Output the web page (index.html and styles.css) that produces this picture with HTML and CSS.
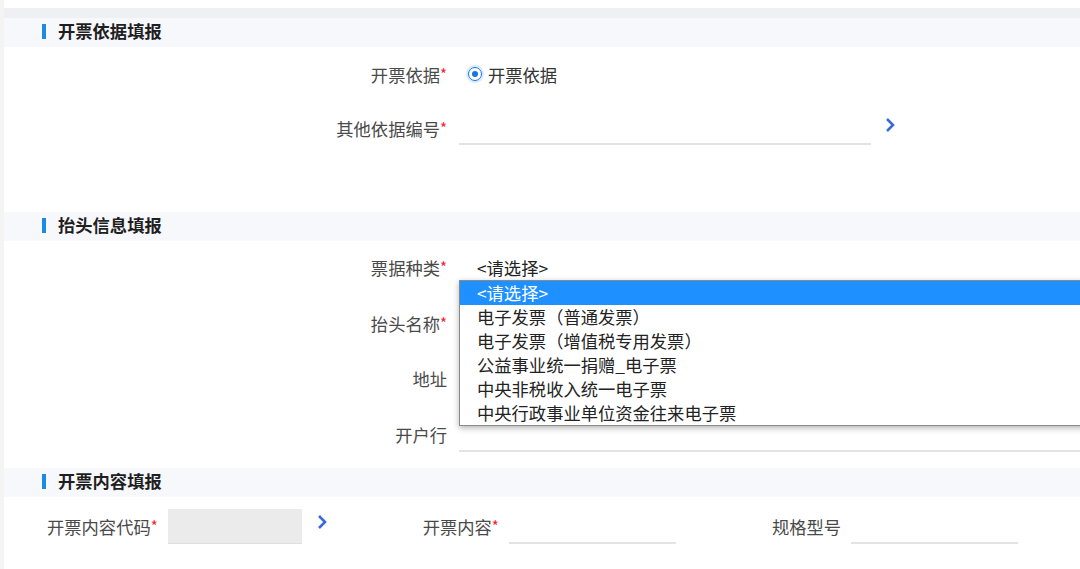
FILE: index.html
```html
<!DOCTYPE html>
<html lang="zh-CN">
<head>
    <meta charset="UTF-8">
    <meta name="viewport" content="width=device-width, initial-scale=1.0">
    <title>开票信息填报</title>
    <link rel="stylesheet" href="styles.css">
</head>
<body>
    <div class="page">
        <div class="top-card"></div>
        <div class="band"></div>

        <div class="card">
            <!-- 开票依据 -->
            <div class="section-title"><span class="bar"></span>开票依据填报</div>
            <div class="section-body first">
                <div class="form-row">
                    <label class="label">开票依据<i>*</i></label>
                    <div class="field">
                        <span class="radio"><span class="dot"></span></span>
                        <span class="radio-text">开票依据</span>
                    </div>
                </div>
                <div class="form-row">
                    <label class="label">其他依据编号<i>*</i></label>
                    <div class="field">
                        <input class="line-input short" type="text">
                        <svg class="chevron" width="10" height="16" viewBox="0 0 10 16"><path d="M2 2 L8 8 L2 14" fill="none" stroke="#3a6bd6" stroke-width="2.6"/></svg>
                    </div>
                </div>
            </div>

            <!-- 抬头信息 -->
            <div class="section-title"><span class="bar"></span>抬头信息填报</div>
            <div class="section-body second">
                <div class="form-row">
                    <label class="label">票据种类<i>*</i></label>
                    <div class="field select-wrap">
                        <span class="select-value">&lt;请选择&gt;</span>
                        <ul class="dropdown">
                            <li class="active">&lt;请选择&gt;</li>
                            <li>电子发票（普通发票）</li>
                            <li>电子发票（增值税专用发票）</li>
                            <li>公益事业统一捐赠_电子票</li>
                            <li>中央非税收入统一电子票</li>
                            <li>中央行政事业单位资金往来电子票</li>
                        </ul>
                    </div>
                </div>
                <div class="form-row">
                    <label class="label">抬头名称<i>*</i></label>
                    <div class="field"><input class="line-input wide" type="text"></div>
                </div>
                <div class="form-row">
                    <label class="label">地址</label>
                    <div class="field"><input class="line-input wide" type="text"></div>
                </div>
                <div class="form-row">
                    <label class="label">开户行</label>
                    <div class="field"><input class="line-input wide" type="text"></div>
                </div>
            </div>

            <!-- 开票内容 -->
            <div class="section-title"><span class="bar"></span>开票内容填报</div>
            <div class="content-row">
                <div class="item item-code">
                    <label class="label-inline">开票内容代码<i>*</i></label>
                    <div class="grey-box"></div>
                    <svg class="chevron" width="10" height="16" viewBox="0 0 10 16"><path d="M2 2 L8 8 L2 14" fill="none" stroke="#3a6bd6" stroke-width="2.6"/></svg>
                </div>
                <div class="item item-content">
                    <label class="label-inline">开票内容<i>*</i></label>
                    <input class="line-input small" type="text">
                </div>
                <div class="item item-spec">
                    <label class="label-inline">规格型号</label>
                    <input class="line-input small" type="text">
                </div>
            </div>
        </div>
    </div>
</body>
</html>
```

FILE: styles.css
```css
body {
    margin: 0;
    padding: 0;
    font-family: "Noto Sans CJK SC", "Microsoft YaHei", sans-serif;
    font-size: 17.3px;
    color: #4a4a4a;
    background: #ffffff;
    overflow: hidden;
}

.page {
    border-left: 4px solid #f4f4f5;
    height: 569px;
}

.top-card {
    height: 8px;
    background: #ffffff;
}

.band {
    height: 10px;
    background: #eff0f4;
}

.card {
    background: #ffffff;
}

.section-title {
    display: flex;
    align-items: center;
    height: 29px;
    padding-left: 38px;
    padding-bottom: 3px;
    box-sizing: border-box;
    background: #f7f8fc;
    font-weight: bold;
    color: #1f1f1f;
    line-height: 26px;
}

.section-title .bar {
    width: 4px;
    height: 15px;
    background: #1e88e5;
    margin-right: 12px;
}

.section-body {
    display: flex;
    flex-direction: column;
}

.section-body.first {
    padding: 10px 0 67px;
    gap: 20px;
}

.section-body.second {
    padding: 9px 0 16px;
    gap: 22px;
}

.form-row {
    display: flex;
    align-items: center;
    height: 34px;
}

.label {
    width: 443px;
    text-align: right;
    line-height: 34px;
    white-space: nowrap;
}

.label i, .label-inline i {
    font-style: normal;
    color: #f5222d;
    font-size: 15px;
    vertical-align: 2px;
}

.field {
    display: flex;
    align-items: center;
    margin-left: 12px;
    flex: 1;
    height: 34px;
}

.radio {
    width: 12px;
    height: 12px;
    border: 1px solid #1a73e8;
    border-radius: 50%;
    display: flex;
    align-items: center;
    justify-content: center;
    margin-left: 9px;
    box-shadow: 0 0 0 2px rgba(30, 144, 255, 0.18);
}

.radio .dot {
    width: 6px;
    height: 6px;
    border-radius: 50%;
    background: #1a73e8;
}

.radio-text {
    margin-left: 6px;
    color: #333;
}

.line-input {
    border: none;
    border-bottom: 2px solid #e3e3e3;
    height: 32px;
    padding: 0;
    outline: none;
    background: transparent;
    font-family: inherit;
    font-size: 17px;
}

.line-input.short {
    width: 412px;
}

.line-input.wide {
    flex: 1;
}

.line-input.small {
    width: 167px;
}

.chevron {
    margin-left: 14px;
    margin-top: -6px;
}

.select-wrap {
    position: relative;
}

.select-value {
    padding-left: 18px;
    color: #222;
}

.dropdown {
    position: absolute;
    top: 30px;
    left: 0;
    width: 640px;
    margin: 0;
    padding: 0;
    list-style: none;
    background: #ffffff;
    border: 1px solid #8a8a8a;
    box-shadow: 0 2px 6px rgba(0, 0, 0, 0.3);
    z-index: 5;
}

.dropdown li {
    height: 24px;
    line-height: 24px;
    padding-left: 17px;
    color: #222;
    white-space: nowrap;
}

.dropdown li.active {
    background: #1e90ff;
    color: #ffffff;
}

.content-row {
    display: flex;
    align-items: center;
    padding-top: 12px;
    height: 35px;
}

.item {
    display: flex;
    align-items: center;
}

.item-code {
    margin-left: 43px;
}

.item-content {
    margin-left: 96px;
}

.item-spec {
    margin-left: 96px;
}

.label-inline {
    white-space: nowrap;
    margin-right: 10px;
}

.grey-box {
    width: 134px;
    height: 35px;
    background: #ebebeb;
    border-bottom: 1px solid #dedede;
    box-sizing: border-box;
}

.item-code .chevron {
    margin-left: 15px;
    margin-top: -10px;
}
```
